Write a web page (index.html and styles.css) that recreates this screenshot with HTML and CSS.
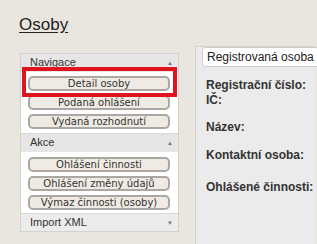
FILE: index.html
```html
<!DOCTYPE html>
<html>
<head>
<meta charset="utf-8">
<link rel="stylesheet" href="styles.css">
</head>
<body>
<div class="page">
  <h1 class="title">Osoby</h1>
  <div class="layout">
    <div class="sidebar">
      <div class="sec-head">Navigace <span class="arrow">▲</span></div>
      <div class="sec-body">
        <button class="btn">Detail osoby</button>
        <button class="btn">Podaná ohlášení</button>
        <button class="btn">Vydaná rozhodnutí</button>
      </div>
      <div class="sec-head mid">Akce <span class="arrow">▲</span></div>
      <div class="sec-body second">
        <button class="btn">Ohlášení činnosti</button>
        <button class="btn">Ohlášení změny údajů</button>
        <button class="btn">Výmaz činnosti (osoby)</button>
      </div>
      <div class="sec-head last">Import XML <span class="arrow">▼</span></div>
      <div class="highlight"></div>
    </div>
    <div class="detail">
      <div class="legend">Registrovaná osoba</div>
      <div class="field f1">Registrační číslo:</div>
      <div class="field">IČ:</div>
      <div class="field g1">Název:</div>
      <div class="field g2">Kontaktní osoba:</div>
      <div class="field g3">Ohlášené činnosti:</div>
    </div>
  </div>
</div>
</body>
</html>
```
FILE: styles.css
```css
html, body {
  margin: 0;
  padding: 0;
}
body {
  width: 317px;
  height: 244px;
  overflow: hidden;
  background: #e9e6df;
  font-family: "Liberation Sans", Arial, sans-serif;
  color: #333;
}
.page {
  padding: 15px 0 0 19px;
}
.title {
  margin: 0;
  font-size: 17px;
  font-weight: normal;
  text-decoration: underline;
  text-underline-offset: 2px;
  line-height: 20px;
  color: #222;
}
.layout {
  display: flex;
  align-items: flex-start;
  margin-top: 7px;
}
.sidebar {
  position: relative;
  flex: none;
  width: 157px;
  margin-top: 11px;
  margin-left: 1px;
  border: 1px solid #d4d2ce;
  background: #fff;
}
.sec-head {
  position: relative;
  height: 18px;
  line-height: 17px;
  padding-left: 9px;
  font-size: 11px;
  background: #e6e6e6;
  color: #333;
}
.sec-head.mid {
  border-top: 1px solid #d8d8d8;
}
.sec-head.last {
  height: 17px;
  border-top: 1px solid #d8d8d8;
  background: #ececec;
}
.arrow {
  position: absolute;
  right: 5px;
  top: 1px;
  font-size: 6px;
  color: #777;
}
.sec-body {
  display: flex;
  flex-direction: column;
  gap: 4px;
  padding: 4px 8px 4px 7px;
}
.sec-body.second {
  padding-top: 5px;
  padding-bottom: 3px;
}
.highlight {
  position: absolute;
  left: 1px;
  top: 13px;
  width: 155px;
  height: 30px;
  box-sizing: border-box;
  border: 4px solid #e0141e;
}
.btn {
  display: block;
  box-sizing: border-box;
  width: 142px;
  height: 15px;
  margin: 0;
  padding: 0;
  border: 2px solid #aba8a3;
  border-radius: 5px;
  background: #efebe4;
  font-family: "DejaVu Sans", Verdana, sans-serif;
  font-size: 10px;
  line-height: 10px;
  color: #333;
  text-align: center;
  overflow: visible;
}
.detail {
  flex: none;
  box-sizing: border-box;
  margin: 4px 0 0 16px;
  padding: 0 0 0 10px;
  width: 121px;
  height: 198px;
  border: 1px solid #d4d2ce;
  border-right: none;
  border-bottom: none;
  background: #ebebeb;
}
.legend {
  display: inline-block;
  white-space: nowrap;
  margin: -3px 0 0 -4px;
  padding: 2px 4px 2px 4px;
  font-size: 12px;
  line-height: 14px;
  background: #fff;
  border: 1px solid #cfcfcf;
  border-radius: 3px;
  color: #222;
}
.field {
  font-weight: bold;
  font-size: 12px;
  line-height: 15px;
  color: #333;
  white-space: nowrap;
}
.f1 { margin-top: 11px; }
.g1 { margin-top: 12px; }
.g2 { margin-top: 13px; }
.g3 { margin-top: 17px; }
```
